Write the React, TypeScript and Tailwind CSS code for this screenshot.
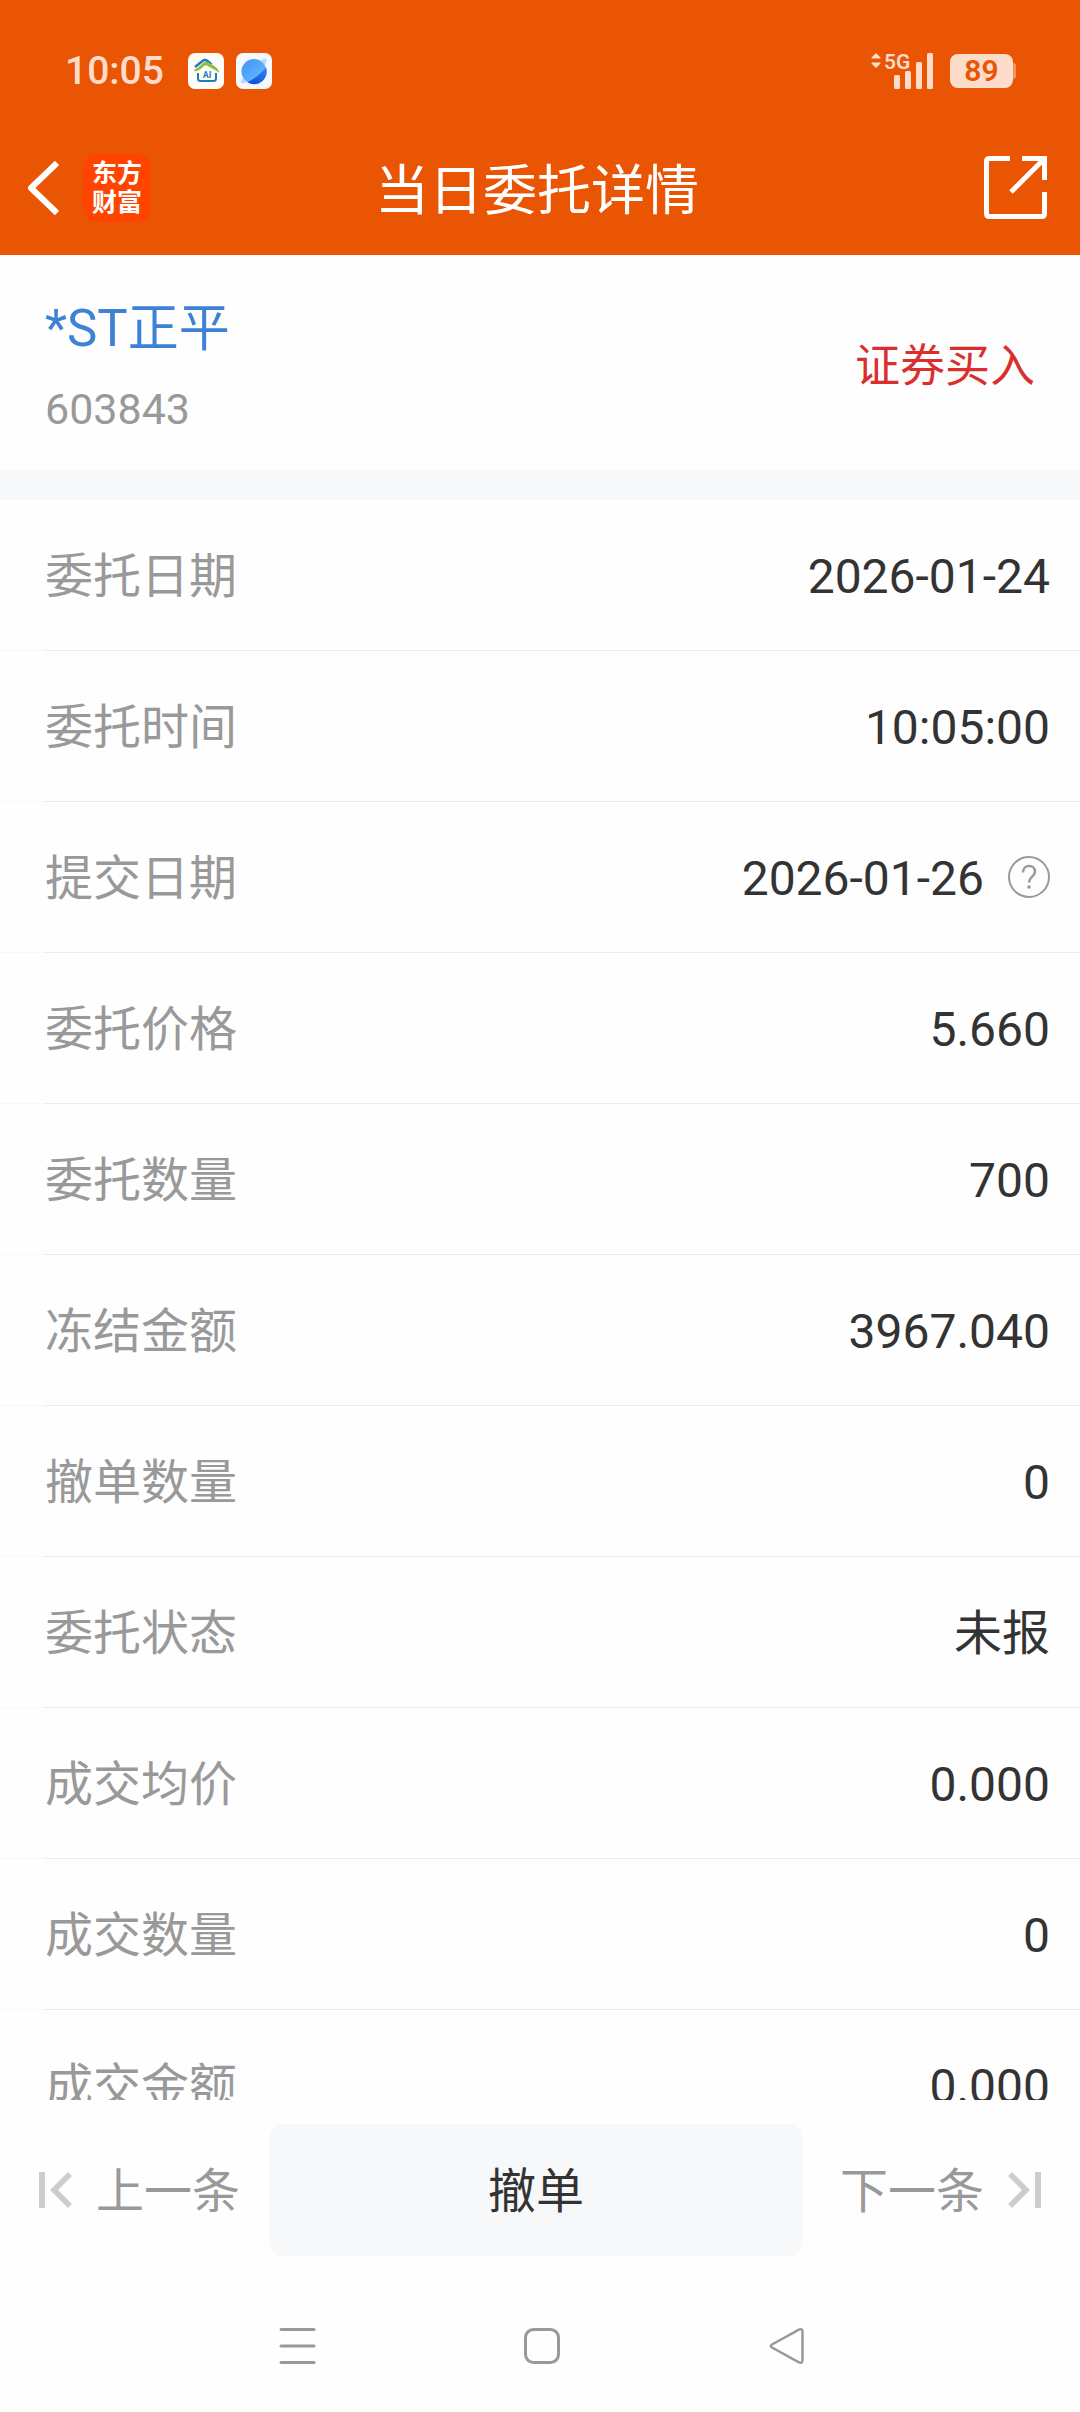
type Row = {
  label: string;
  value: string;
  help?: boolean;
};

const rows: Row[] = [
  { label: "委托日期", value: "2026-01-24" },
  { label: "委托时间", value: "10:05:00" },
  { label: "提交日期", value: "2026-01-26", help: true },
  { label: "委托价格", value: "5.660" },
  { label: "委托数量", value: "700" },
  { label: "冻结金额", value: "3967.040" },
  { label: "撤单数量", value: "0" },
  { label: "委托状态", value: "未报" },
  { label: "成交均价", value: "0.000" },
  { label: "成交数量", value: "0" },
  { label: "成交金额", value: "0.000" },
];

const HomeAppIcon = () => (
  <svg width="36" height="36" viewBox="0 0 36 36">
    <rect width="36" height="36" rx="7" fill="#fffdf8" />
    <path
      d="M10 20v5.500q0 2.500 2.500 2.500h13q2.500 0 2.500-2.500V20"
      fill="none"
      stroke="#1f7dbd"
      strokeWidth="2"
    />
    <path
      d="M7 14 14.500 8q2.500-2 5 0l4 3.500"
      fill="none"
      stroke="#1f7dbd"
      strokeWidth="2.500"
    />
    <path
      d="M6.500 17.500c4 0 6-2 8.500-4.500 2-2 4-2 6 0l9 5c-1-3-4-4-8-7-2.500-2-5.500-1.500-7.500.5-2.500 2.500-4.500 4.500-8 6Z"
      fill="#8cbf3f"
      stroke="#8cbf3f"
      strokeWidth="1.500"
    />
    <text
      x="19"
      y="25"
      textAnchor="middle"
      fontSize="9"
      fontWeight="700"
      fill="#1f7dbd"
    >
      AI
    </text>
  </svg>
);

const PlanetAppIcon = () => (
  <svg width="36" height="36" viewBox="0 0 36 36">
    <defs>
      <linearGradient id="planetLight" x1="0" y1="0" x2="1" y2="1">
        <stop offset="0" stopColor="#3f8df8" />
        <stop offset="1" stopColor="#6fc6ff" />
      </linearGradient>
      <linearGradient id="planetDark" x1="1" y1="0" x2="0.400" y2="1">
        <stop offset="0" stopColor="#2f86f5" />
        <stop offset="1" stopColor="#0f55dc" />
      </linearGradient>
    </defs>
    <rect width="36" height="36" rx="7" fill="#f4f7fc" />
    <path
      d="M6 26c-2 3-1 5 2 4C16 27 28 16 30.500 9c.8-3-1-4-4-2.500Z"
      fill="#b5dcfb"
    />
    <circle cx="18" cy="18.500" r="12.500" fill="url(#planetLight)" />
    <path
      d="M30 14.500A12.500 12.500 0 0 1 11.500 29.200C19 25.500 25 20.500 30 14.500Z"
      fill="url(#planetDark)"
    />
  </svg>
);

const SignalIcon = () => (
  <svg width="64" height="40" viewBox="0 0 64 40" fill="#fddccb">
    <path d="M6 2l4.500 4.500v1H1.500v-1ZM6 17l4.500-4.500v-1H1.500v1Z" />
    <text x="14" y="17.500" fontSize="21" fontWeight="600">
      5G
    </text>
    <rect x="24" y="24" width="6" height="14" rx="1.500" />
    <rect x="35" y="20" width="6" height="18" rx="1.500" />
    <rect x="46" y="11" width="6" height="27" rx="1.500" />
    <rect x="57" y="2" width="6" height="36" rx="1.500" />
  </svg>
);

const StatusBar = () => (
  <div className="flex h-[120px] items-center justify-between pt-[22px] pr-[64px] pl-[65px]">
    <div className="flex items-center">
      <span className="mr-6 text-[39px] leading-none font-medium text-[#fddccb]">
        10:05
      </span>
      <div className="flex gap-3">
        <HomeAppIcon />
        <PlanetAppIcon />
      </div>
    </div>
    <div className="flex items-center gap-4">
      <SignalIcon />
      <div className="flex items-center">
        <div className="flex h-[34px] w-[63px] items-center justify-center rounded-lg bg-[#fddccb] text-[30px] leading-none font-semibold text-[#ea5504]">
          89
        </div>
        <div className="h-4 w-[3px] rounded-r-sm bg-[#f4925f]"></div>
      </div>
    </div>
  </div>
);

const Header = () => (
  <header className="shrink-0 bg-[#ea5504] text-white">
    <StatusBar />
    <div className="grid h-[135px] grid-cols-[1fr_auto_1fr] items-center pr-[33px] pl-[27px]">
      <div className="flex items-center gap-6">
        <button type="button" aria-label="返回">
          <svg
            width="32"
            height="56"
            viewBox="0 0 32 56"
            fill="none"
            stroke="currentColor"
            strokeWidth="6"
            strokeLinejoin="round"
          >
            <path d="M30 3 4 28l26 25" />
          </svg>
        </button>
        <div className="flex size-[68px] flex-col items-center justify-center rounded-[14px] bg-[#ff4400] text-[25px] leading-[29px] font-bold">
          <span>东方</span>
          <span>财富</span>
        </div>
      </div>
      <h1 className="pt-2 text-[54px] leading-[72px]">当日委托详情</h1>
      <button type="button" aria-label="分享" className="justify-self-end">
        <svg
          width="63"
          height="63"
          viewBox="0 0 63 63"
          fill="none"
          stroke="currentColor"
          strokeWidth="5"
        >
          <path d="M26 2.500H5.500q-3 0-3 3v52q0 3 3 3h52q3 0 3-3V36" />
          <path d="M38 2.500h22.500V24M60 3 27 36" />
        </svg>
      </button>
    </div>
  </header>
);

const HelpIcon = () => (
  <svg
    width="42"
    height="42"
    viewBox="0 0 42 42"
    fill="none"
    stroke="#999999"
    strokeWidth="2"
  >
    <circle cx="21" cy="21" r="20" />
    <path
      d="M15 16.500c0-4 2.500-6.500 6-6.500s6 2.200 6 5.500c0 5-6 5.500-6 11"
      strokeWidth="2.500"
    />
    <circle cx="21" cy="31" r="1.800" fill="#999999" stroke="none" />
  </svg>
);

const DetailRow = ({ label, value, help }: Row) => (
  <div>
    <div className="flex h-[150px] items-center justify-between pr-[30px] pl-[45px] text-[48px] leading-[60px]">
      <dt className="pt-1 text-[#999999]">{label}</dt>
      <dd className="flex items-center gap-6 text-[#333333]">
        <span className="pt-1">{value}</span>
        {help && (
          <button type="button" aria-label="说明">
            <HelpIcon />
          </button>
        )}
      </dd>
    </div>
    <div className="bg-[#f7f7f7] pl-[45px]">
      <div className="h-px bg-[#ebebeb]"></div>
    </div>
  </div>
);

const SkipIcon = ({ className }: { className?: string }) => (
  <svg
    width="33"
    height="36"
    viewBox="0 0 33 36"
    fill="none"
    stroke="#cccccc"
    className={className}
  >
    <path d="M3 0v36" strokeWidth="6" />
    <path d="M31 2 15 18l16 16" strokeWidth="5.500" />
  </svg>
);

const ActionBar = () => (
  <div className="flex shrink-0 items-center px-[39px] py-6 text-[48px] leading-[60px] text-[#999999]">
    <button type="button" className="mr-[30px] flex items-center gap-6">
      <SkipIcon />
      <span className="pt-1">上一条</span>
    </button>
    <button
      type="button"
      className="h-[132px] grow rounded-xl bg-[#f7f8fa] pt-1 text-[#333333]"
    >
      撤单
    </button>
    <button type="button" className="ml-[38px] flex items-center gap-6">
      <span className="pt-1">下一条</span>
      <SkipIcon className="rotate-180" />
    </button>
  </div>
);

const SystemNav = () => (
  <nav className="flex h-[132px] shrink-0 items-center justify-between pr-[274px] pl-[278px] text-[#999999]">
    <button type="button" aria-label="菜单">
      <svg
        width="38"
        height="38"
        viewBox="0 0 38 38"
        stroke="currentColor"
        strokeWidth="3"
        strokeLinecap="round"
      >
        <path d="M3 2.500h33M3 19h33M3 35.500h33" />
      </svg>
    </button>
    <button type="button" aria-label="主页">
      <svg
        width="38"
        height="38"
        viewBox="0 0 38 38"
        fill="none"
        stroke="currentColor"
        strokeWidth="3"
      >
        <rect x="2.500" y="2.500" width="33" height="33" rx="8" />
      </svg>
    </button>
    <button type="button" aria-label="后退">
      <svg
        width="38"
        height="38"
        viewBox="0 0 38 38"
        fill="none"
        stroke="currentColor"
        strokeWidth="2.500"
        strokeLinejoin="round"
      >
        <path d="M4 17.500 30.500 2.800q4-1.800 4 2v28.400q0 3.800-4 2L4 20.500q-2.500-1.500 0-3Z" />
      </svg>
    </button>
  </nav>
);

const App = () => {
  return (
    <div className="flex h-screen flex-col bg-[#fefefe] font-[Roboto,'Noto_Sans_CJK_SC',sans-serif]">
      <Header />
      <section className="flex shrink-0 items-center justify-between px-[45px] pt-[38px] pb-[29px]">
        <div>
          <h2 className="text-[51px] leading-[72px] text-[#3e82d6]">
            *ST正平
          </h2>
          <p className="mt-3 text-[43px] leading-[64px] text-[#999999]">
            603843
          </p>
        </div>
        <span className="text-[45px] leading-[60px] text-[#d9302f]">
          证券买入
        </span>
      </section>
      <div className="h-[30px] shrink-0 bg-[#f7f8fa]"></div>
      <dl className="min-h-0 grow overflow-y-auto [scrollbar-width:none]">
        {rows.map((row) => (
          <DetailRow key={row.label} {...row} />
        ))}
      </dl>
      <ActionBar />
      <SystemNav />
    </div>
  );
};

export default App;
